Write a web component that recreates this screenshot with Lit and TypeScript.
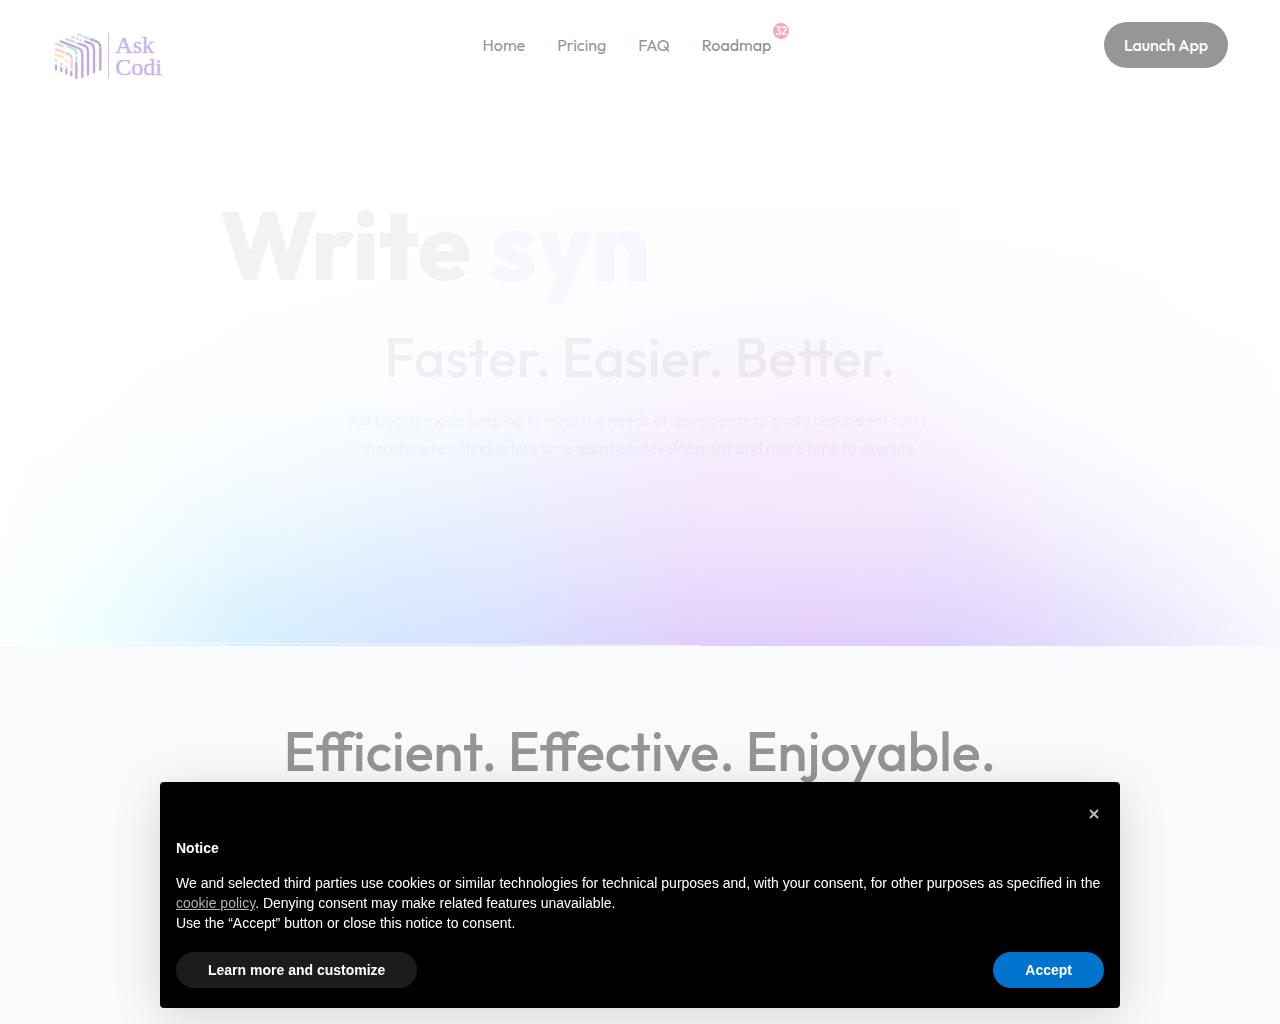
import { LitElement, html, css } from "lit";
import { customElement } from "lit/decorators.js";

@customElement("app-logo")
class AppLogo extends LitElement {
  static styles = css`
    :host { display: block; }
    .mark { display: block; width: 108px; height: 48px; fill: none; stroke-width: 7; stroke-linecap: round; stroke-linejoin: round; }
    .purple { stroke: #bba9e6; }
    .green { stroke: #bfe8d4; }
    .pink { stroke: #fcc9d0; }
    .blue { stroke: #bcdcfb; }
    .yellow { stroke: #fde7b4; }
    .rule { stroke: #cdb9f1; stroke-width: 3; stroke-linecap: butt; }
    .word { fill: #c8b3ee; stroke: #c8b3ee; stroke-width: 1; font-family: "Liberation Serif", serif; font-size: 72px; }
  `;
  render() {
    return html`
      <svg class="mark" viewBox="42 36 324 144" role="img" aria-label="AskCodi">
        <g class="purple">
          <path d="M153 58L169 64Q181 69 181 83V149" />
          <path d="M135 64L151 70Q162 75 162 89V157" />
          <path d="M117 71L133 77Q144 82 144 96V164" />
          <path d="M62 64L114 84Q127 89 127 104V171" />
          <path d="M109 129V174M94 155V166M79 149V160M64 144V154M48 137V148" />
        </g>
        <g class="green">
          <path d="M115 44L124 47M131 50L148 57M48 71L69 79M84 79L99 85Q109 89 109 99V101M109 110V121M79 140V142M64 130V135M48 121V122" />
        </g>
        <g class="pink">
          <path d="M97 51L103 53M112 56L113 57M122 61L123 61M48 88L69 96M77 99L86 102Q95 106 95 116M95 124V144" />
        </g>
        <g class="blue"><path d="M79 57L101 65M109 69L110 70" /></g>
        <g class="yellow"><path d="M48 104L69 112M78 119Q79 121 79 126" /></g>
        <path class="rule" d="M206 39V176" />
        <text class="word" x="226" y="99">Ask</text>
        <text class="word" x="226" y="165">Codi</text>
      </svg>
    `;
  }
}

@customElement("cookie-notice")
class CookieNotice extends LitElement {
  static styles = css`
    :host {
      position: fixed; left: 16px; right: 16px; bottom: 16px;
      display: flex; justify-content: center;
      font: 14px/20px "Liberation Sans", Arial, sans-serif;
    }
    .panel {
      box-sizing: border-box; width: 100%; max-width: 960px; padding: 16px 16px 20px;
      display: flex; flex-direction: column;
      background: #000; color: #fff; border-radius: 4px;
      box-shadow: 0 8px 48px rgba(0, 0, 0, 0.15);
    }
    .top { display: flex; justify-content: flex-end; margin-bottom: 8px; }
    .close { width: 20px; height: 32px; padding: 0; border: 0; background: none; cursor: pointer; }
    .cross { display: block; width: 20px; height: 32px; stroke: #bdbdbd; stroke-width: 2; fill: none; }
    .title { margin: 0 0 15px; font-size: 14px; line-height: 20px; font-weight: 700; }
    .text { margin: 0; }
    .policy { color: #b2b2b2; }
    .actions { display: flex; justify-content: space-between; gap: 16px; margin-top: 19px; }
    .btn {
      height: 36px; padding: 0 32px; border: 0; border-radius: 18px;
      color: #fff; background: #1c1c1c; font: inherit; font-weight: 700; cursor: pointer;
    }
    .accept { background: #0073ce; }
  `;
  render() {
    return html`
      <section class="panel" role="dialog" aria-labelledby="notice-title">
        <div class="top">
          <button class="close" aria-label="Close this notice">
            <svg class="cross" viewBox="0 0 20 32" aria-hidden="true"><path d="M6 12L14 20M14 12L6 20" /></svg>
          </button>
        </div>
        <h2 class="title" id="notice-title">Notice</h2>
        <p class="text">We and selected third parties use cookies or similar technologies for technical purposes and, with your consent, for other purposes as specified in the <a class="policy" href="#policy">cookie policy</a>. Denying consent may make related features unavailable.</p>
        <p class="text">Use the “Accept” button or close this notice to consent.</p>
        <div class="actions">
          <button class="btn">Learn more and customize</button>
          <button class="btn accept">Accept</button>
        </div>
      </section>
    `;
  }
}

@customElement("app-root")
class AppRoot extends LitElement {
  static styles = css`
    :host {
      display: flex; flex-direction: column; min-height: 100vh;
      font-family: Outfit, Lato, sans-serif; color: #000; background: #f8fafc;
    }
    .hero {
      display: flex; flex-direction: column;
      background:
        radial-gradient(ellipse 56% 60% at 0% 36%, rgba(255, 255, 255, 0.75) 0%, rgba(255, 255, 255, 0.6) 50%, rgba(255, 255, 255, 0) 100%),
        radial-gradient(ellipse 38% 66% at 100% 34%, rgba(255, 255, 255, 0.9) 0%, rgba(255, 255, 255, 0.6) 60%, rgba(255, 255, 255, 0) 100%),
        radial-gradient(ellipse 26% 32% at 65% 76%, rgba(255, 232, 248, 0.35) 0%, rgba(255, 232, 248, 0) 100%),
        linear-gradient(180deg, #fff 30%, rgba(255, 255, 255, 0.93) 46%, rgba(255, 255, 255, 0.82) 62%, rgba(255, 255, 255, 0.6) 74%, rgba(255, 255, 255, 0.32) 87%, rgba(255, 255, 255, 0) 100%),
        linear-gradient(90deg, #fcffff 0%, #effeff 8%, #d8f1ff 19%, #d4e6ff 31%, #d8e0ff 40%, #dfcdfd 54%, #dfcafd 64%, #dccffe 74%, #e7e0fd 86%, #f8f7fe 100%);
    }
    .bar {
      display: flex; align-items: flex-start; justify-content: space-between;
      padding: 22px 52px 0 54px; box-sizing: border-box; height: 112px;
    }
    .logo { display: block; margin-top: 10px; }
    .nav { display: flex; gap: 32px; padding: 0 28px 0 16px; font-size: 16px; line-height: 46px; }
    .link { position: relative; color: #969696; text-decoration: none; }
    .strong { color: #8e8e8e; }
    .badge {
      position: absolute; left: 100%; top: 1px; margin-left: 2px;
      width: 16px; height: 16px; border-radius: 8px;
      background: #fba6b8; color: #fff; font-size: 11px; line-height: 16px; text-align: center; font-weight: 500;
    }
    .launch {
      padding: 0 20px; border-radius: 23px; background: #969696; color: #fff;
      font-size: 16px; line-height: 46px; font-weight: 500; text-decoration: none;
    }
    .intro { padding: 71px 24px 179px; text-align: center; }
    .title {
      display: flex; align-items: center; gap: 18px; max-width: 840px; margin: 0 auto;
      font-size: 96px; line-height: 124px; font-weight: 800; color: #f2f2f2; text-align: left;
    }
    .typed { font-size: 102px; color: #f7f7ff; }
    .sub { margin: 15px 0 0; font-size: 54px; line-height: 70px; font-weight: 500; color: rgba(0, 0, 0, 0.05); }
    .lead { max-width: 600px; margin: 14px auto 0; font-size: 16px; line-height: 28px; color: rgba(0, 0, 0, 0.05); }
    .floor { display: block; width: 100%; height: 5px; stroke: #fff; fill: none; stroke-opacity: 0.7; }
    .features { flex: 1; padding: 70px 24px 200px; background: #f8fafc; text-align: center; }
    .headline { margin: 0; font-size: 54px; line-height: 70px; font-weight: 500; color: #949596; }
  `;
  render() {
    return html`
      <div class="hero">
        <header class="bar">
          <a class="logo" href="#home"><app-logo></app-logo></a>
          <nav class="nav">
            <a class="link" href="#home">Home</a>
            <a class="link" href="#pricing">Pricing</a>
            <a class="link" href="#faq">FAQ</a>
            <a class="link strong" href="#roadmap">Roadmap<span class="badge">32</span></a>
          </nav>
          <a class="launch" href="#app">Launch App</a>
        </header>
        <section class="intro">
          <h1 class="title"><span>Write</span> <span class="typed">syn</span></h1>
          <p class="sub">Faster. Easier. Better.</p>
          <p class="lead">AskCodi is made keeping in mind the needs of developers to avoid redundant tasks, therefore resulting in less time spent on development and more time to execute.</p>
        </section>
        <svg class="floor" viewBox="0 0 1280 5" preserveAspectRatio="none" aria-hidden="true">
          <path d="M20 1L360 3L700 4.5M30 4L40 1M105 5L112 2M145 5L150 2M183 5L188 2M222 5L227 2M262 5L266 2M302 5L304 3M342 5L343 3M380 5V3" />
        </svg>
      </div>
      <section class="features">
        <h2 class="headline">Efficient. Effective. Enjoyable.</h2>
      </section>
      <cookie-notice></cookie-notice>
    `;
  }
}
